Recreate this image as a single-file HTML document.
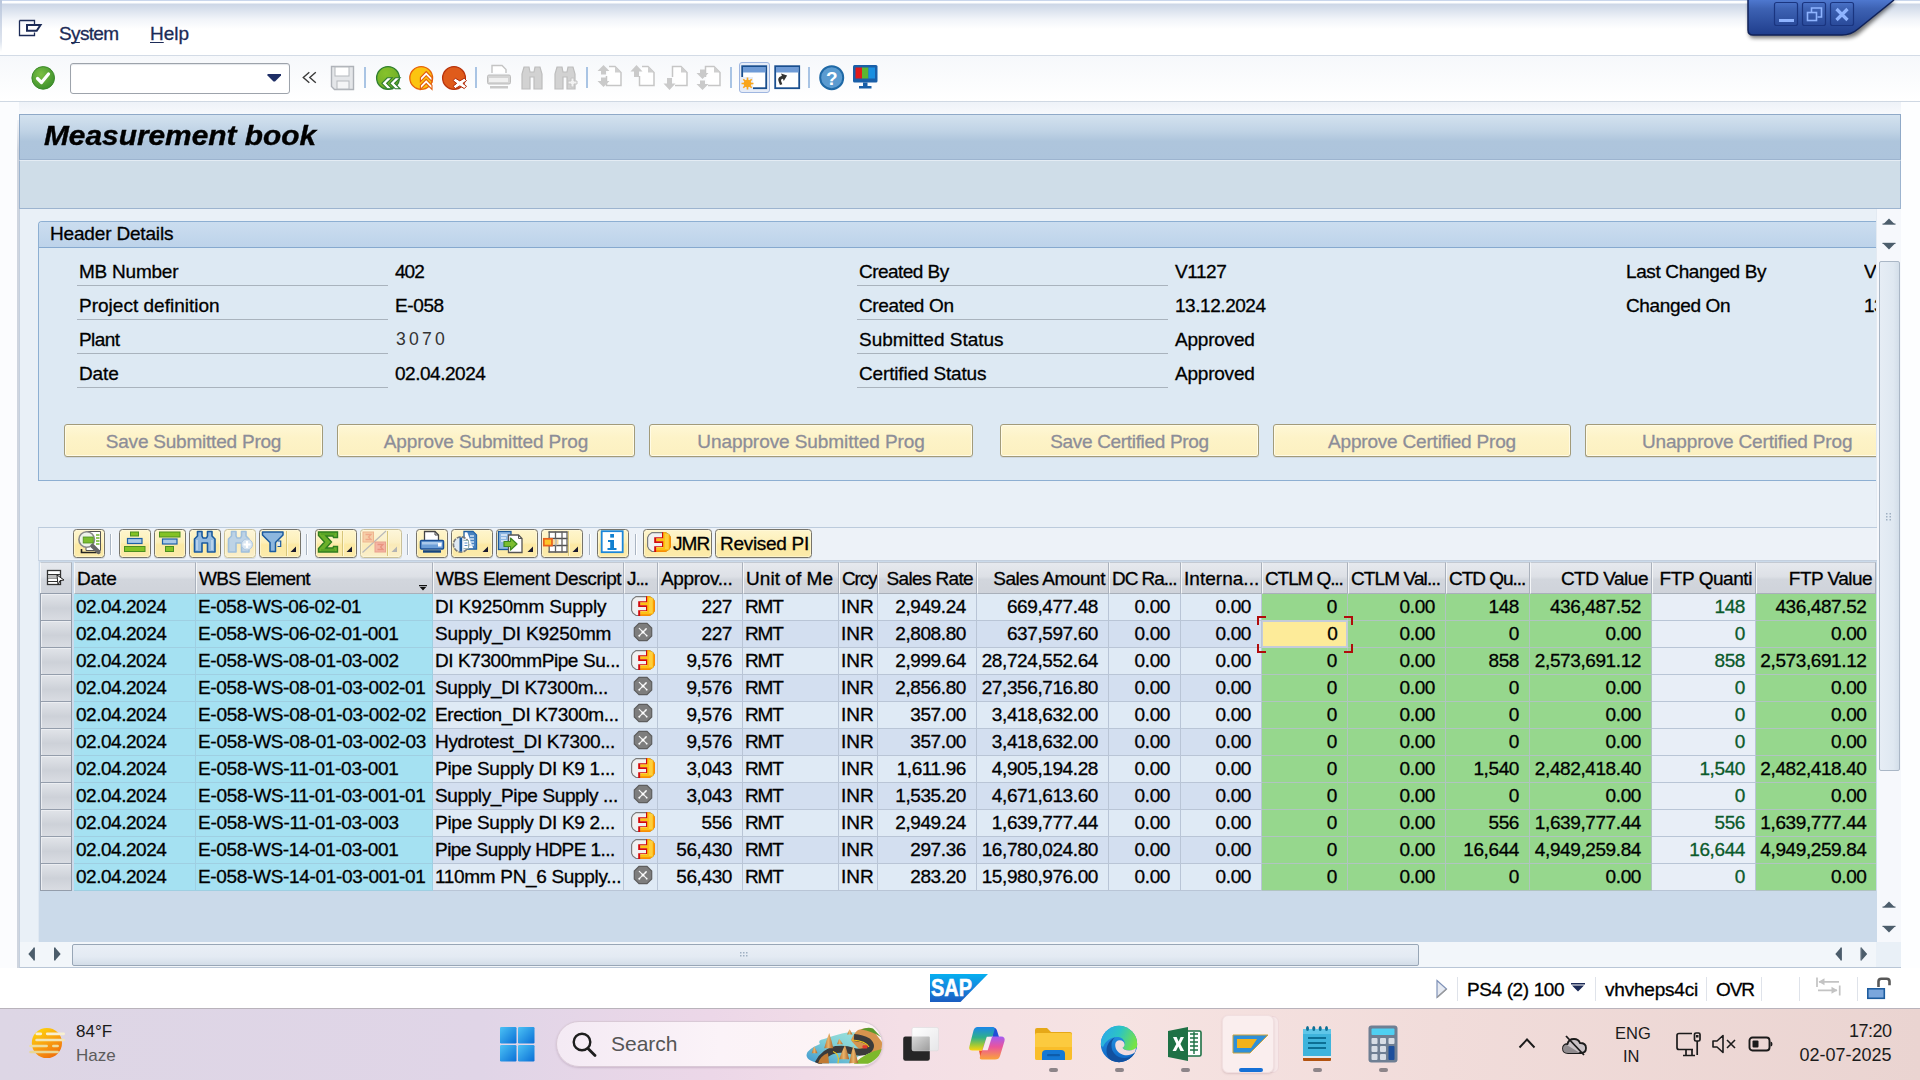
<!DOCTYPE html>
<html><head><meta charset="utf-8"><title>Measurement book</title>
<style>
*{box-sizing:border-box;margin:0;padding:0}
html,body{width:1920px;height:1080px;overflow:hidden;background:#fff}
body{position:relative;font-family:"Liberation Sans",sans-serif;font-size:19px;letter-spacing:-0.4px;color:#000;line-height:1;-webkit-text-stroke:0.3px}
.a{position:absolute}
.t{position:absolute;white-space:nowrap;line-height:22px;height:22px}
/* top chrome */
#topstrip{left:0;top:0;width:1920px;height:56px;background:linear-gradient(#c9d6ec 0,#c9d6ec 1px,#fdfeff 1.500px,#fdfeff 3px,#ccd6e6 4px,#dde4ef 11px,#f1f4f9 19px,#ffffff 29px,#ffffff 55px)}
#menuline{left:0;top:55px;width:1920px;height:1px;background:#d3dbe6}
#toolbar{left:0;top:56px;width:1920px;height:45px;background:linear-gradient(#f6f8fb,#ffffff)}
#toolline{left:0;top:101px;width:1920px;height:1px;background:#cfd8e3}
#gap{left:0;top:102px;width:1920px;height:12px;background:linear-gradient(#eef2f8,#f7f9fc)}
#leftedge{left:0;top:102px;width:19px;height:866px;background:#fbfcfe}
#rightedge{left:1901px;top:102px;width:19px;height:866px;background:#fdfeff}
.menu{color:#1c2b57}
/* title */
#title{left:19px;top:114px;width:1882px;height:46px;border:1px solid #8fa9c7;border-bottom:1px solid #9db4cf;background:linear-gradient(#d3e2ef 0,#c1d4e6 35%,#aec5dc 60%,#adc4dc 100%)}
#title span{position:absolute;left:24px;top:5px;font-size:28px;font-weight:bold;font-style:italic;line-height:32px;white-space:nowrap;letter-spacing:0;-webkit-text-stroke:0.4px #000;transform:scaleX(1.066);transform-origin:0 0}
#appbar{left:19px;top:160px;width:1882px;height:49px;border:1px solid #9db4cf;border-top:1px solid #e4ecf4;background:#cfdde8}
#main{left:19px;top:209px;width:1882px;height:758px;background:#e9f0f7;border-left:1px solid #c5d0de;border-right:1px solid #d0d9e6}
</style></head>
<body>
<!-- TOP CHROME -->
<div class="a" id="topstrip"></div>
<div class="a" id="menuline"></div>
<div class="a" id="toolbar"></div>
<div class="a" id="toolline"></div>
<div class="a" id="gap"></div>
<div class="a" id="leftedge"></div>
<div class="a" style="left:0;top:0;width:2px;height:52px;background:linear-gradient(#b9c6dc,#dfe5ef 80%,#fff)"></div>
<div class="a" id="rightedge"></div>
<div class="a" style="left:17px;top:120px;width:2px;height:848px;background:linear-gradient(#f3f5f9 0,#cfd5df 30px,#cfd5df 100%)"></div>
<!-- menu icon -->
<svg class="a" style="left:18px;top:18px" width="26" height="22" viewBox="0 0 26 22"><path d="M1.5 2.5h15v4M1.5 2.5v15h15v-3" fill="none" stroke="#1c2b57" stroke-width="1.3"/><path d="M9 7h13.500l-3.800 5.800H9z" fill="#fff" stroke="#1c2b57" stroke-width="2"/></svg>
<div class="t menu" style="left:59px;top:23px;letter-spacing:-0.65px">S<span style="text-decoration:underline;text-decoration-skip-ink:none;text-underline-offset:2px">y</span>stem</div>
<div class="t menu" style="left:150px;top:23px;letter-spacing:0"><span style="text-decoration:underline;text-decoration-skip-ink:none;text-underline-offset:2px">H</span>elp</div>
<!-- window controls -->
<svg class="a" style="left:1740px;top:0" width="170" height="46" viewBox="0 0 170 46">
<defs><linearGradient id="wg" x1="0" y1="0" x2="0" y2="1"><stop offset="0" stop-color="#4e78cf"/><stop offset="0.25" stop-color="#3d62b3"/><stop offset="1" stop-color="#1f3d8c"/></linearGradient>
<filter id="ws" x="-10%" y="-10%" width="120%" height="150%"><feGaussianBlur stdDeviation="2"/></filter></defs>
<path d="M9 2h146l-34 30q-6 6-16 6H14q-5 0-5-5z" fill="#000" opacity="0.55" filter="url(#ws)"/>
<path d="M8 0h146l-36 29q-7 6-16 6H13q-5 0-5-5z" fill="url(#wg)"/>
<path d="M8 0v30q0 5 5 5h89q9 0 16-6L154 0" fill="none" stroke="#10225a" stroke-width="1.5"/>
<g fill="none" stroke="#1a3580" stroke-width="1.2"><rect x="34.5" y="2.5" width="23" height="23" rx="2"/><rect x="62.5" y="2.5" width="23" height="23" rx="2"/><rect x="90.5" y="2.5" width="23" height="23" rx="2"/></g>
<rect x="39" y="19" width="15" height="3" fill="#8fb4ff"/>
<g fill="none" stroke="#8fb4ff" stroke-width="1.6"><rect x="67.5" y="12.5" width="9" height="8"/><path d="M71.5 12V8h10v9h-4"/></g>
<path d="M96.5 9l11 11M107.5 9l-11 11" stroke="#8fb4ff" stroke-width="3.2"/>
</svg>
<!-- toolbar -->
<svg class="a" style="left:28px;top:64px" width="28" height="28" viewBox="0 0 28 28"><defs><radialGradient id="gok" cx="0.4" cy="0.35" r="0.7"><stop offset="0" stop-color="#7bc043"/><stop offset="1" stop-color="#3c8f2c"/></radialGradient></defs><circle cx="15.200" cy="13.900" r="11.300" fill="url(#gok)" stroke="#3b8a2a" stroke-width="1"/><path d="M9.500 14.500l4 4 7-8.500" fill="none" stroke="#fff" stroke-width="3.200" stroke-linecap="round" stroke-linejoin="round"/></svg>
<div class="a" style="left:70px;top:63px;width:220px;height:31px;background:#fff;border:1px solid #9da3ab;border-radius:3px;box-shadow:inset 0 1px 1px #e3e6ea"></div>
<svg class="a" style="left:266px;top:73px" width="16" height="10" viewBox="0 0 16 10"><path d="M1.500 1h13.500v1.500l-6 6h-1.500l-6-6z" fill="#1f2f66"/></svg>
<svg class="a" style="left:300px;top:70px" width="20" height="16" viewBox="300 70 20 16"><path d="M309.300 72.300l-6 5.200 6 5.200M315.800 72.300l-6 5.200 6 5.200" fill="none" stroke="#3a3a3a" stroke-width="1.400"/></svg>
<!-- save (disabled) -->
<svg class="a" style="left:330px;top:65px" width="26" height="26" viewBox="0 0 26 26"><path d="M1.5 1.5h22v23h-19l-3-3z" fill="#e4e6e9" stroke="#aeb2b8" stroke-width="1.4"/><rect x="5" y="2" width="14" height="9" fill="#fff" stroke="#b5b9be"/><rect x="7" y="16" width="12" height="8" fill="#f4f5f6" stroke="#b5b9be"/></svg>
<div class="a" style="left:364px;top:67px;width:2px;height:21px;background:#a9c4e4"></div>
<!-- back / exit / cancel -->
<svg class="a" style="left:370px;top:60px" width="102" height="36" viewBox="370 60 102 36">
<defs><clipPath id="cb1"><circle cx="388" cy="78" r="12.300"/></clipPath><clipPath id="cb2"><circle cx="421.200" cy="78" r="12.300"/></clipPath><clipPath id="cb3"><circle cx="454" cy="78" r="12.300"/></clipPath>
<radialGradient id="gb1" cx=".4" cy=".3" r=".8"><stop offset="0" stop-color="#86c22c"/><stop offset=".7" stop-color="#74b228"/><stop offset="1" stop-color="#4f9a2b"/></radialGradient></defs>
<circle cx="388" cy="78" r="11.400" fill="url(#gb1)" stroke="#2f7f2f" stroke-width="1.300"/>
<g fill="#fff" stroke="#2c7a2c" stroke-width="1.100" stroke-linejoin="miter"><path d="M381.800 83.300l5.500-5.500h4.800l-5.500 5.500 5.500 5.500h-4.800z"/><path d="M389.800 83.300l5.500-5.500h4.800l-5.500 5.500 5.500 5.500h-4.800z"/></g>
<circle cx="421.200" cy="78" r="11.400" fill="#fcc410" stroke="#e7630c" stroke-width="1.300"/>
<g fill="#fff" stroke="#e35d0a" stroke-width="1.100"><path d="M426.200 71.500l5.800 6v4.200l-5.800-6-5.800 6v-4.200z"/><path d="M426.200 79.300l5.800 6v4.200l-5.800-6-5.800 6v-4.200z"/></g>
<circle cx="454" cy="78" r="11.400" fill="#df5b1b" stroke="#b8330c" stroke-width="1.300"/>
<g><path d="M455.300 78.200l4.500 2.700 4.500-2.700 2.200 2.400-3.600 2.800 3.600 2.800-2.200 2.400-4.500-2.700-4.500 2.700-2.200-2.400 3.600-2.800-3.600-2.800z" fill="#fff" stroke="#b02a08" stroke-width="1"/></g>
</svg>
<div class="a" style="left:475px;top:67px;width:2px;height:21px;background:#a9c4e4"></div>
<!-- disabled icons -->
<svg class="a" style="left:486px;top:64px" width="27" height="27" viewBox="0 0 27 27"><path d="M6 9V1.5h10l4 4V9" fill="#fff" stroke="#c4c4c4" stroke-width="1.4"/><rect x="1.5" y="11" width="23" height="9" rx="1.5" fill="#d4d4d4" stroke="#bdbdbd"/><rect x="3" y="14" width="19" height="4" fill="#f0f0f0"/><rect x="4" y="22" width="18" height="2.5" fill="#c9c9c9"/></svg>
<svg class="a" style="left:520px;top:64px" width="24" height="27" viewBox="0 0 24 27"><path d="M2 25V10l2-7h5l1 5h4l1-5h5l2 7v15h-8V13h-4v12z" fill="#d2d2d2" stroke="#bdbdbd" stroke-width="1.2"/></svg>
<svg class="a" style="left:553px;top:64px" width="26" height="27" viewBox="0 0 26 27"><path d="M2 25V10l2-7h5l1 5h4l1-5h5l2 7v15h-8V13h-4v12z" fill="#d2d2d2" stroke="#bdbdbd" stroke-width="1.2"/><path d="M15 17h3v-3h3v3h3v3h-3v3h-3v-3h-3z" fill="#f2f2f2" stroke="#c4c4c4"/></svg>
<div class="a" style="left:586px;top:67px;width:2px;height:21px;background:#a9c4e4"></div>
<svg class="a" style="left:597px;top:64px" width="26" height="27" viewBox="0 0 26 27"><path d="M9.500 12v9.500h14.500V8.500l-6-6H12" fill="#fff" stroke="#c6c6c6" stroke-width="1.500"/><path d="M18 2.500v6h6z" fill="#cfcfcf"/><path d="M6.500 1l6 6H9v3.500H4V7H.500zM6.500 23l6-6H9v-3.500H4V17H.500z" fill="#cacaca"/></svg>
<svg class="a" style="left:630px;top:64px" width="26" height="27" viewBox="0 0 26 27"><path d="M9.500 12v9.500h14.500V8.500l-6-6H12" fill="#fff" stroke="#c6c6c6" stroke-width="1.500"/><path d="M18 2.500v6h6z" fill="#cfcfcf"/><path d="M6.500 1l6 6.500H9v5.500H4V7.500H.500z" fill="#cacaca"/></svg>
<svg class="a" style="left:663px;top:64px" width="26" height="27" viewBox="0 0 26 27"><path d="M9.500 13V2.500h8.500l6 6v13H12" fill="#fff" stroke="#c6c6c6" stroke-width="1.500"/><path d="M18 2.500v6h6z" fill="#cfcfcf"/><path d="M6.500 26l6-6.500H9V14H4v5.500H.500z" fill="#cacaca"/></svg>
<svg class="a" style="left:696px;top:64px" width="26" height="27" viewBox="0 0 26 27"><path d="M9.500 13V2.500h8.500l6 6v13H12" fill="#fff" stroke="#c6c6c6" stroke-width="1.500"/><path d="M18 2.500v6h6z" fill="#cfcfcf"/><path d="M6.500 15l6-6H9V5.500H4V9H.500zM6.500 26l6-6H9v-3.500H4V20H.500z" fill="#cacaca"/></svg>
<div class="a" style="left:730px;top:67px;width:2px;height:21px;background:#a9c4e4"></div>
<!-- layout buttons -->
<div class="a" style="left:739px;top:62px;width:31px;height:31px;border:1px solid #9fb6e0;border-radius:3px;background:#e6ecf7"></div>
<svg class="a" style="left:741px;top:65px" width="27" height="25" viewBox="0 0 27 25"><rect x="1.2" y="1.2" width="24" height="22" fill="#fff" stroke="#1a4f8f" stroke-width="1.8"/><rect x="2" y="2" width="22.5" height="5.5" fill="#6f9bd6"/><rect x="0" y="12" width="12" height="13" fill="#e6ecf7"/><circle cx="6.5" cy="18.5" r="3.8" fill="#f9a51a"/><g stroke="#f9a51a" stroke-width="1.6"><path d="M6.5 12.5v12M.5 18.5h12M2.3 14.3l8.4 8.4M10.7 14.3l-8.4 8.4"/></g></svg>
<svg class="a" style="left:774px;top:65px" width="27" height="25" viewBox="0 0 27 25"><rect x="1.2" y="1.2" width="24" height="22" fill="#fff" stroke="#1a4f8f" stroke-width="1.8"/><rect x="2" y="2" width="22.5" height="5.5" fill="#6f9bd6"/><path d="M4 19v-4q0-4 4-4h1V8.5l5 4-5 4V14H8q-1.5 0-1.5 1.5V19z" fill="#333" transform="rotate(-20 8 14)"/></svg>
<div class="a" style="left:808px;top:67px;width:2px;height:21px;background:#a9c4e4"></div>
<svg class="a" style="left:818px;top:64px" width="28" height="28" viewBox="0 0 28 28"><circle cx="13.7" cy="13.7" r="11.5" fill="#5b9bd0" stroke="#1f69a6" stroke-width="2"/><text x="13.7" y="20.5" font-family="Liberation Sans" font-weight="bold" font-size="19" fill="#fff" text-anchor="middle">?</text></svg>
<svg class="a" style="left:852px;top:64px" width="27" height="27" viewBox="0 0 27 27"><rect x="1" y="1" width="24.5" height="17.5" rx="1.5" fill="#1a5fa8"/><rect x="3.5" y="3.5" width="6.5" height="11" fill="#e01b1b"/><rect x="10" y="3.5" width="6.5" height="11" fill="#5db531"/><rect x="16.5" y="3.5" width="6.5" height="11" fill="#1a8fe0"/><rect x="11" y="18.5" width="4.5" height="4" fill="#1a5fa8"/><rect x="7" y="22" width="12.5" height="2.5" fill="#1a5fa8"/></svg>
<!-- title -->
<div class="a" id="title"><span>Measurement book</span></div>
<div class="a" id="appbar"></div>
<div class="a" id="main"></div>
<style>
#grp{left:38px;top:221px;width:1839px;height:260px;border:1px solid #8dafd2;border-right:none;border-radius:4px 0 0 0;background:#dde9f3}
#grpt{left:39px;top:222px;width:1838px;height:26px;background:linear-gradient(#cbddef,#bdd3ea);border-bottom:1px solid #86a9cf;border-radius:3px 0 0 0}
.ul{position:absolute;height:1px;background:#a9b3bd;width:311px}
.btn{position:absolute;top:424px;height:33px;border:1px solid #a29b7a;border-radius:3px;background:linear-gradient(#fef7d6 0,#fdf3c8 40%,#fcf0c0 100%);color:#8c8d98;text-align:center;line-height:34px;white-space:nowrap;overflow:hidden;box-shadow:0 1px 0 #cfd6de,inset 0 0 0 1px #fffbe6}
</style>
<div class="a" id="grp"></div>
<div class="a" id="grpt"></div>
<div class="t" style="left:50px;top:223px;letter-spacing:-0.17px">Header Details</div>
<div class="t" style="left:79px;top:261px;letter-spacing:-0.23px">MB Number</div>
<div class="t" style="left:79px;top:295px;letter-spacing:0.01px">Project definition</div>
<div class="t" style="left:79px;top:329px;letter-spacing:-0.56px">Plant</div>
<div class="t" style="left:79px;top:363px;letter-spacing:-0.12px">Date</div>
<div class="ul" style="left:77px;top:285px"></div><div class="ul" style="left:77px;top:319px"></div><div class="ul" style="left:77px;top:353px"></div><div class="ul" style="left:77px;top:387px"></div>
<div class="t" style="left:395px;top:261px;letter-spacing:-0.97px">402</div>
<div class="t" style="left:395px;top:295px;letter-spacing:-0.38px">E-058</div>
<div class="t" style="left:396px;top:327.500px;font-size:17.600px;letter-spacing:3.200px;color:#333;-webkit-text-stroke:0">3070</div>
<div class="t" style="left:395px;top:363px;letter-spacing:-0.47px">02.04.2024</div>
<div class="t" style="left:859px;top:261px;letter-spacing:-0.54px">Created By</div>
<div class="t" style="left:859px;top:295px;letter-spacing:-0.36px">Created On</div>
<div class="t" style="left:859px;top:329px;letter-spacing:-0.01px">Submitted Status</div>
<div class="t" style="left:859px;top:363px;letter-spacing:-0.16px">Certified Status</div>
<div class="ul" style="left:857px;top:285px"></div><div class="ul" style="left:857px;top:319px"></div><div class="ul" style="left:857px;top:353px"></div><div class="ul" style="left:857px;top:387px"></div>
<div class="t" style="left:1175px;top:261px;letter-spacing:-0.44px">V1127</div>
<div class="t" style="left:1175px;top:295px;letter-spacing:-0.45px">13.12.2024</div>
<div class="t" style="left:1175px;top:329px;letter-spacing:-0.22px">Approved</div>
<div class="t" style="left:1175px;top:363px;letter-spacing:-0.22px">Approved</div>
<div class="t" style="left:1626px;top:261px;letter-spacing:-0.38px">Last Changed By</div>
<div class="t" style="left:1626px;top:295px;letter-spacing:-0.35px">Changed On</div>
<div class="t" style="left:1864px;top:261px;width:12px;overflow:hidden;letter-spacing:-0.44px">V1127</div>
<div class="t" style="left:1864px;top:295px;width:12px;overflow:hidden;letter-spacing:-0.45px">13.12.2024</div>
<div class="btn" style="left:64px;width:259px;letter-spacing:-0.22px">Save Submitted Prog</div>
<div class="btn" style="left:337px;width:298px;letter-spacing:-0.12px">Approve Submitted Prog</div>
<div class="btn" style="left:649px;width:324px;letter-spacing:-0.07px">Unapprove Submitted Prog</div>
<div class="btn" style="left:1000px;width:259px;letter-spacing:-0.32px">Save Certified Prog</div>
<div class="btn" style="left:1273px;width:298px;letter-spacing:-0.2px">Approve Certified Prog</div>
<div class="btn" style="left:1585px;width:292px;border-right:none;border-radius:3px 0 0 3px;text-align:left;padding-left:56px;letter-spacing:-0.17px">Unapprove Certified Prog</div>
<!-- right vertical scroll area -->
<div class="a" style="left:1876px;top:209px;width:25px;height:733px;background:#f6f8fc;border-left:1px solid #e3eaf2"></div>
<svg class="a" style="left:1881px;top:215px" width="16" height="40" viewBox="0 0 16 40"><path d="M2.500 9h11L8 3.500z" fill="#4c5d6b"/><path d="M2.500 29h11L8 34.500z" fill="#4c5d6b"/><rect x="1.500" y="8.500" width="13" height="1.200" fill="#4c5d6b"/><rect x="1.500" y="27.800" width="13" height="1.200" fill="#4c5d6b"/></svg>
<div class="a" style="left:1879px;top:261px;width:21px;height:510px;border:1px solid #aab7c6;border-radius:2px;background:linear-gradient(90deg,#e6edf5,#dfe8f1 70%,#d3dee9)"></div>
<svg class="a" style="left:1885px;top:512px" width="8" height="10" viewBox="0 0 8 10"><g fill="#9fb0c2"><rect x="1" y="1" width="1.5" height="1.5"/><rect x="4.5" y="1" width="1.5" height="1.5"/><rect x="1" y="4" width="1.5" height="1.5"/><rect x="4.5" y="4" width="1.5" height="1.5"/><rect x="1" y="7" width="1.5" height="1.5"/><rect x="4.5" y="7" width="1.5" height="1.5"/></g></svg>
<svg class="a" style="left:1881px;top:898px" width="16" height="40" viewBox="0 0 16 40"><path d="M2.500 9h11L8 3.500z" fill="#4c5d6b"/><path d="M2.500 29h11L8 34.500z" fill="#4c5d6b"/><rect x="1.500" y="8.500" width="13" height="1.200" fill="#4c5d6b"/><rect x="1.500" y="27.800" width="13" height="1.200" fill="#4c5d6b"/></svg>
<style>
#alvtb{left:38px;top:527px;width:1839px;height:34px;border-top:1px solid #bccbdc;border-bottom:1px solid #c3cfde;border-left:1px solid #c9d5e3;background:#edf2f8}
#alvbg{left:38px;top:561px;width:1839px;height:381px;background:#cbdaea;border-left:1px solid #dfe8f2}
.hc{position:absolute;top:562px;height:32px;background:linear-gradient(#e6e9ee 0,#dde0e6 45%,#d2d6dd 55%,#cfd3da 100%);border-left:1px solid #f4f6f8;border-right:1px solid #aab1bc;border-bottom:1px solid #a9b0ba;border-top:1px solid #c3c9d2;overflow:hidden;white-space:nowrap;line-height:32px;padding:0 3px 0 2px}
.c{position:absolute;height:27px;border-right:1px solid #b9c5d6;border-bottom:1px solid #b9c5d6;overflow:hidden;white-space:nowrap;line-height:26px;padding:0 4px 0 2px}
.sel{position:absolute;left:40px;width:32px;height:28px;background:linear-gradient(#e1e4e9,#cdd1d8 55%,#d9dce2);border:1px solid #949dab;box-shadow:inset 1px 1px 0 #eceef2}
.o{background:#dfeaf5}.e{background:#d3dff0}
.k{background:#a5e1f2;border-right-color:#9fcfe2;border-bottom-color:#9fcfe2}
.g{background:#96d78d;border-right-color:#b0c4c0;border-bottom-color:#b0c4c0}
.fq{background:#e8eef7;color:#0b5a2b}
.r{text-align:right}.l{text-align:left}
</style>
<div class="a" id="alvtb"></div><div class="a" id="alvbg"></div>
<div class="hc" style="left:40px;width:32px"></div>
<svg class="a" style="left:46px;top:569px" width="20" height="18" viewBox="0 0 20 18"><rect x="1.5" y="1.5" width="13" height="14" fill="#fff" stroke="#333" stroke-width="1.3"/><path d="M1.5 5.5h13M1.5 9h13M1.5 12.5h13" stroke="#333" stroke-width="1.2"/><rect x="2" y="6" width="12" height="3" fill="#bdbdbd"/><path d="M11 6l7 5-4 .6L12 16z" fill="#fff" stroke="#222" stroke-width="1"/></svg>
<div class="hc l" style="left:74px;width:122px;letter-spacing:-0.12px">Date</div>
<div class="hc l" style="left:196px;width:237px;letter-spacing:-0.67px">WBS Element</div>
<div class="hc l" style="left:433px;width:191px">WBS Element Descript</div>
<div class="hc l" style="left:624px;width:34px;letter-spacing:-1.1px">J...</div>
<div class="hc l" style="left:658px;width:85px;letter-spacing:-0.36px">Approv...</div>
<div class="hc l" style="left:743px;width:96px;letter-spacing:0.05px">Unit of Me</div>
<div class="hc l" style="left:839px;width:39px;letter-spacing:-1.1px">Crcy</div>
<div class="hc r" style="left:878px;width:99px;letter-spacing:-0.65px">Sales Rate</div>
<div class="hc r" style="left:977px;width:132px;letter-spacing:-0.46px">Sales Amount</div>
<div class="hc l" style="left:1109px;width:72px;letter-spacing:-1.04px">DC Ra...</div>
<div class="hc l" style="left:1181px;width:81px;letter-spacing:0.03px">Interna...</div>
<div class="hc l" style="left:1262px;width:86px;letter-spacing:-1.1px">CTLM Q...</div>
<div class="hc l" style="left:1348px;width:98px;letter-spacing:-0.89px">CTLM Val...</div>
<div class="hc l" style="left:1446px;width:84px;letter-spacing:-1.03px">CTD Qu...</div>
<div class="hc r" style="left:1530px;width:122px;letter-spacing:-0.49px">CTD Value</div>
<div class="hc r" style="left:1652px;width:104px;letter-spacing:-0.44px">FTP Quanti</div>
<div class="hc r" style="left:1756px;width:120px;letter-spacing:-0.54px">FTP Value</div>
<svg class="a" style="left:419px;top:585px" width="8" height="6" viewBox="0 0 8 6"><path d="M0 0h8v1.200H0zM.800 2h6.400L4 5.600z" fill="#111"/></svg>
<div class="sel" style="top:593px"></div>
<div class="c k l" style="left:74px;top:594px;width:122px;letter-spacing:-0.47px">02.04.2024</div>
<div class="c k l" style="left:196px;top:594px;width:237px;letter-spacing:-0.4px">E-058-WS-06-02-01</div>
<div class="c o l" style="left:433px;top:594px;width:191px;letter-spacing:-0.17px">DI K9250mm Supply</div>
<div class="c o l" style="left:624px;top:594px;width:34px"><svg width="24" height="20.500" viewBox="0 0 24 20.500" style="position:absolute;left:7px;top:2px"><defs><clipPath id="fp0"><path d="M5 .3h13.500l3.500 2 2 3.200v9l-2 3.200-3.500 2.300H5L1.800 17.500.3 14.500v-9L1.800 2.500z"/></clipPath></defs><path d="M5 .6h13.500l3.300 2 1.900 3v8.800l-1.900 3-3.300 2.100H5l-3-2.300-1.400-2.800v-8.800L2 2.800z" fill="#f1f1f1" stroke="#7b7b7b" stroke-width="1.200"/><g clip-path="url(#fp0)"><path d="M16 0h9v21H9.200v-5.800H16zM9.200 6.300H16v2.900H9.200z" fill="#fdc114"/><path d="M18 2h3.500v15H18z" fill="#fece3c"/><rect x="22.300" y="2" width="2" height="16" fill="#f78d05"/><rect x="9.200" y="18.300" width="13" height="2" fill="#f78d05"/><rect x="16" y="0" width="6" height="1.100" fill="#f9a010"/><path d="M7.200 5.300H15V0h1.200v6.300H9.200v2.900h7v5.900H9.200V21H7.200v-6.800H15V11.100H7.200z" fill="#d40a0a"/></g></svg></div>
<div class="c o r" style="left:658px;top:594px;width:85px;padding-right:10px">227</div>
<div class="c o l" style="left:743px;top:594px;width:96px;letter-spacing:-1.1px">RMT</div>
<div class="c o l" style="left:839px;top:594px;width:39px;letter-spacing:0.0px">INR</div>
<div class="c o r" style="left:878px;top:594px;width:99px;padding-right:10px">2,949.24</div>
<div class="c o r" style="left:977px;top:594px;width:132px;padding-right:10px">669,477.48</div>
<div class="c o r" style="left:1109px;top:594px;width:72px;padding-right:10px">0.00</div>
<div class="c o r" style="left:1181px;top:594px;width:81px;padding-right:10px">0.00</div>
<div class="c g r" style="left:1262px;top:594px;width:86px;padding-right:10px">0</div>
<div class="c g r" style="left:1348px;top:594px;width:98px;padding-right:10px">0.00</div>
<div class="c g r" style="left:1446px;top:594px;width:84px;padding-right:10px">148</div>
<div class="c g r" style="left:1530px;top:594px;width:122px;padding-right:10px">436,487.52</div>
<div class="c fq r" style="left:1652px;top:594px;width:104px;padding-right:10px">148</div>
<div class="c g r" style="left:1756px;top:594px;width:120px;padding-right:9.500px;border-right:none">436,487.52</div>
<div class="sel" style="top:620px"></div>
<div class="c k l" style="left:74px;top:621px;width:122px;letter-spacing:-0.47px">02.04.2024</div>
<div class="c k l" style="left:196px;top:621px;width:237px;letter-spacing:-0.36px">E-058-WS-06-02-01-001</div>
<div class="c e l" style="left:433px;top:621px;width:191px;letter-spacing:-0.2px">Supply_DI K9250mm</div>
<div class="c e l" style="left:624px;top:621px;width:34px"><svg width="20" height="20" viewBox="0 0 20 20" style="position:absolute;left:9px;top:1px"><path d="M6 1.300h8l4.700 4.700v8l-4.700 4.700H6L1.300 14V6z" fill="#7d7d7d" stroke="#5e5e5e" stroke-width="1.200"/><path d="M6.300 6.300l7.400 7.400M13.700 6.300l-7.400 7.400" stroke="#f4f4f4" stroke-width="1.200"/><circle cx="10" cy="10" r="1.500" fill="#fff"/><g fill="#fff"><circle cx="6.300" cy="13.700" r="1"/><circle cx="13.700" cy="13.700" r=".9"/><circle cx="12.500" cy="7.500" r=".9"/><circle cx="6.300" cy="6.300" r=".6"/></g></svg></div>
<div class="c e r" style="left:658px;top:621px;width:85px;padding-right:10px">227</div>
<div class="c e l" style="left:743px;top:621px;width:96px;letter-spacing:-1.1px">RMT</div>
<div class="c e l" style="left:839px;top:621px;width:39px;letter-spacing:0.0px">INR</div>
<div class="c e r" style="left:878px;top:621px;width:99px;padding-right:10px">2,808.80</div>
<div class="c e r" style="left:977px;top:621px;width:132px;padding-right:10px">637,597.60</div>
<div class="c e r" style="left:1109px;top:621px;width:72px;padding-right:10px">0.00</div>
<div class="c e r" style="left:1181px;top:621px;width:81px;padding-right:10px">0.00</div>
<div class="c g r" style="left:1262px;top:621px;width:86px;padding-right:10px">0</div>
<div class="c g r" style="left:1348px;top:621px;width:98px;padding-right:10px">0.00</div>
<div class="c g r" style="left:1446px;top:621px;width:84px;padding-right:10px">0</div>
<div class="c g r" style="left:1530px;top:621px;width:122px;padding-right:10px">0.00</div>
<div class="c fq r" style="left:1652px;top:621px;width:104px;padding-right:10px">0</div>
<div class="c g r" style="left:1756px;top:621px;width:120px;padding-right:9.500px;border-right:none">0.00</div>
<div class="sel" style="top:647px"></div>
<div class="c k l" style="left:74px;top:648px;width:122px;letter-spacing:-0.47px">02.04.2024</div>
<div class="c k l" style="left:196px;top:648px;width:237px;letter-spacing:-0.35px">E-058-WS-08-01-03-002</div>
<div class="c o l" style="left:433px;top:648px;width:191px;letter-spacing:-0.42px">DI K7300mmPipe Su...</div>
<div class="c o l" style="left:624px;top:648px;width:34px"><svg width="24" height="20.500" viewBox="0 0 24 20.500" style="position:absolute;left:7px;top:2px"><defs><clipPath id="fp2"><path d="M5 .3h13.500l3.500 2 2 3.200v9l-2 3.200-3.500 2.300H5L1.800 17.500.3 14.500v-9L1.800 2.500z"/></clipPath></defs><path d="M5 .6h13.500l3.300 2 1.900 3v8.800l-1.900 3-3.300 2.100H5l-3-2.300-1.400-2.800v-8.800L2 2.800z" fill="#f1f1f1" stroke="#7b7b7b" stroke-width="1.200"/><g clip-path="url(#fp2)"><path d="M16 0h9v21H9.200v-5.800H16zM9.200 6.300H16v2.900H9.200z" fill="#fdc114"/><path d="M18 2h3.500v15H18z" fill="#fece3c"/><rect x="22.300" y="2" width="2" height="16" fill="#f78d05"/><rect x="9.200" y="18.300" width="13" height="2" fill="#f78d05"/><rect x="16" y="0" width="6" height="1.100" fill="#f9a010"/><path d="M7.200 5.300H15V0h1.200v6.300H9.200v2.900h7v5.900H9.200V21H7.200v-6.800H15V11.100H7.200z" fill="#d40a0a"/></g></svg></div>
<div class="c o r" style="left:658px;top:648px;width:85px;padding-right:10px">9,576</div>
<div class="c o l" style="left:743px;top:648px;width:96px;letter-spacing:-1.1px">RMT</div>
<div class="c o l" style="left:839px;top:648px;width:39px;letter-spacing:0.0px">INR</div>
<div class="c o r" style="left:878px;top:648px;width:99px;padding-right:10px">2,999.64</div>
<div class="c o r" style="left:977px;top:648px;width:132px;padding-right:10px">28,724,552.64</div>
<div class="c o r" style="left:1109px;top:648px;width:72px;padding-right:10px">0.00</div>
<div class="c o r" style="left:1181px;top:648px;width:81px;padding-right:10px">0.00</div>
<div class="c g r" style="left:1262px;top:648px;width:86px;padding-right:10px">0</div>
<div class="c g r" style="left:1348px;top:648px;width:98px;padding-right:10px">0.00</div>
<div class="c g r" style="left:1446px;top:648px;width:84px;padding-right:10px">858</div>
<div class="c g r" style="left:1530px;top:648px;width:122px;padding-right:10px">2,573,691.12</div>
<div class="c fq r" style="left:1652px;top:648px;width:104px;padding-right:10px">858</div>
<div class="c g r" style="left:1756px;top:648px;width:120px;padding-right:9.500px;border-right:none">2,573,691.12</div>
<div class="sel" style="top:674px"></div>
<div class="c k l" style="left:74px;top:675px;width:122px;letter-spacing:-0.47px">02.04.2024</div>
<div class="c k l" style="left:196px;top:675px;width:237px;letter-spacing:-0.33px">E-058-WS-08-01-03-002-01</div>
<div class="c e l" style="left:433px;top:675px;width:191px;letter-spacing:-0.35px">Supply_DI K7300m...</div>
<div class="c e l" style="left:624px;top:675px;width:34px"><svg width="20" height="20" viewBox="0 0 20 20" style="position:absolute;left:9px;top:1px"><path d="M6 1.300h8l4.700 4.700v8l-4.700 4.700H6L1.300 14V6z" fill="#7d7d7d" stroke="#5e5e5e" stroke-width="1.200"/><path d="M6.300 6.300l7.400 7.400M13.700 6.300l-7.400 7.400" stroke="#f4f4f4" stroke-width="1.200"/><circle cx="10" cy="10" r="1.500" fill="#fff"/><g fill="#fff"><circle cx="6.300" cy="13.700" r="1"/><circle cx="13.700" cy="13.700" r=".9"/><circle cx="12.500" cy="7.500" r=".9"/><circle cx="6.300" cy="6.300" r=".6"/></g></svg></div>
<div class="c e r" style="left:658px;top:675px;width:85px;padding-right:10px">9,576</div>
<div class="c e l" style="left:743px;top:675px;width:96px;letter-spacing:-1.1px">RMT</div>
<div class="c e l" style="left:839px;top:675px;width:39px;letter-spacing:0.0px">INR</div>
<div class="c e r" style="left:878px;top:675px;width:99px;padding-right:10px">2,856.80</div>
<div class="c e r" style="left:977px;top:675px;width:132px;padding-right:10px">27,356,716.80</div>
<div class="c e r" style="left:1109px;top:675px;width:72px;padding-right:10px">0.00</div>
<div class="c e r" style="left:1181px;top:675px;width:81px;padding-right:10px">0.00</div>
<div class="c g r" style="left:1262px;top:675px;width:86px;padding-right:10px">0</div>
<div class="c g r" style="left:1348px;top:675px;width:98px;padding-right:10px">0.00</div>
<div class="c g r" style="left:1446px;top:675px;width:84px;padding-right:10px">0</div>
<div class="c g r" style="left:1530px;top:675px;width:122px;padding-right:10px">0.00</div>
<div class="c fq r" style="left:1652px;top:675px;width:104px;padding-right:10px">0</div>
<div class="c g r" style="left:1756px;top:675px;width:120px;padding-right:9.500px;border-right:none">0.00</div>
<div class="sel" style="top:701px"></div>
<div class="c k l" style="left:74px;top:702px;width:122px;letter-spacing:-0.47px">02.04.2024</div>
<div class="c k l" style="left:196px;top:702px;width:237px;letter-spacing:-0.31px">E-058-WS-08-01-03-002-02</div>
<div class="c o l" style="left:433px;top:702px;width:191px;letter-spacing:-0.36px">Erection_DI K7300m...</div>
<div class="c o l" style="left:624px;top:702px;width:34px"><svg width="20" height="20" viewBox="0 0 20 20" style="position:absolute;left:9px;top:1px"><path d="M6 1.300h8l4.700 4.700v8l-4.700 4.700H6L1.300 14V6z" fill="#7d7d7d" stroke="#5e5e5e" stroke-width="1.200"/><path d="M6.300 6.300l7.400 7.400M13.700 6.300l-7.400 7.400" stroke="#f4f4f4" stroke-width="1.200"/><circle cx="10" cy="10" r="1.500" fill="#fff"/><g fill="#fff"><circle cx="6.300" cy="13.700" r="1"/><circle cx="13.700" cy="13.700" r=".9"/><circle cx="12.500" cy="7.500" r=".9"/><circle cx="6.300" cy="6.300" r=".6"/></g></svg></div>
<div class="c o r" style="left:658px;top:702px;width:85px;padding-right:10px">9,576</div>
<div class="c o l" style="left:743px;top:702px;width:96px;letter-spacing:-1.1px">RMT</div>
<div class="c o l" style="left:839px;top:702px;width:39px;letter-spacing:0.0px">INR</div>
<div class="c o r" style="left:878px;top:702px;width:99px;padding-right:10px">357.00</div>
<div class="c o r" style="left:977px;top:702px;width:132px;padding-right:10px">3,418,632.00</div>
<div class="c o r" style="left:1109px;top:702px;width:72px;padding-right:10px">0.00</div>
<div class="c o r" style="left:1181px;top:702px;width:81px;padding-right:10px">0.00</div>
<div class="c g r" style="left:1262px;top:702px;width:86px;padding-right:10px">0</div>
<div class="c g r" style="left:1348px;top:702px;width:98px;padding-right:10px">0.00</div>
<div class="c g r" style="left:1446px;top:702px;width:84px;padding-right:10px">0</div>
<div class="c g r" style="left:1530px;top:702px;width:122px;padding-right:10px">0.00</div>
<div class="c fq r" style="left:1652px;top:702px;width:104px;padding-right:10px">0</div>
<div class="c g r" style="left:1756px;top:702px;width:120px;padding-right:9.500px;border-right:none">0.00</div>
<div class="sel" style="top:728px"></div>
<div class="c k l" style="left:74px;top:729px;width:122px;letter-spacing:-0.47px">02.04.2024</div>
<div class="c k l" style="left:196px;top:729px;width:237px;letter-spacing:-0.31px">E-058-WS-08-01-03-002-03</div>
<div class="c e l" style="left:433px;top:729px;width:191px;letter-spacing:-0.33px">Hydrotest_DI K7300...</div>
<div class="c e l" style="left:624px;top:729px;width:34px"><svg width="20" height="20" viewBox="0 0 20 20" style="position:absolute;left:9px;top:1px"><path d="M6 1.300h8l4.700 4.700v8l-4.700 4.700H6L1.300 14V6z" fill="#7d7d7d" stroke="#5e5e5e" stroke-width="1.200"/><path d="M6.300 6.300l7.400 7.400M13.700 6.300l-7.400 7.400" stroke="#f4f4f4" stroke-width="1.200"/><circle cx="10" cy="10" r="1.500" fill="#fff"/><g fill="#fff"><circle cx="6.300" cy="13.700" r="1"/><circle cx="13.700" cy="13.700" r=".9"/><circle cx="12.500" cy="7.500" r=".9"/><circle cx="6.300" cy="6.300" r=".6"/></g></svg></div>
<div class="c e r" style="left:658px;top:729px;width:85px;padding-right:10px">9,576</div>
<div class="c e l" style="left:743px;top:729px;width:96px;letter-spacing:-1.1px">RMT</div>
<div class="c e l" style="left:839px;top:729px;width:39px;letter-spacing:0.0px">INR</div>
<div class="c e r" style="left:878px;top:729px;width:99px;padding-right:10px">357.00</div>
<div class="c e r" style="left:977px;top:729px;width:132px;padding-right:10px">3,418,632.00</div>
<div class="c e r" style="left:1109px;top:729px;width:72px;padding-right:10px">0.00</div>
<div class="c e r" style="left:1181px;top:729px;width:81px;padding-right:10px">0.00</div>
<div class="c g r" style="left:1262px;top:729px;width:86px;padding-right:10px">0</div>
<div class="c g r" style="left:1348px;top:729px;width:98px;padding-right:10px">0.00</div>
<div class="c g r" style="left:1446px;top:729px;width:84px;padding-right:10px">0</div>
<div class="c g r" style="left:1530px;top:729px;width:122px;padding-right:10px">0.00</div>
<div class="c fq r" style="left:1652px;top:729px;width:104px;padding-right:10px">0</div>
<div class="c g r" style="left:1756px;top:729px;width:120px;padding-right:9.500px;border-right:none">0.00</div>
<div class="sel" style="top:755px"></div>
<div class="c k l" style="left:74px;top:756px;width:122px;letter-spacing:-0.47px">02.04.2024</div>
<div class="c k l" style="left:196px;top:756px;width:237px;letter-spacing:-0.29px">E-058-WS-11-01-03-001</div>
<div class="c o l" style="left:433px;top:756px;width:191px;letter-spacing:-0.27px">Pipe Supply DI K9 1...</div>
<div class="c o l" style="left:624px;top:756px;width:34px"><svg width="24" height="20.500" viewBox="0 0 24 20.500" style="position:absolute;left:7px;top:2px"><defs><clipPath id="fp6"><path d="M5 .3h13.500l3.500 2 2 3.200v9l-2 3.200-3.500 2.300H5L1.800 17.500.3 14.500v-9L1.800 2.500z"/></clipPath></defs><path d="M5 .6h13.500l3.300 2 1.900 3v8.800l-1.900 3-3.300 2.100H5l-3-2.300-1.400-2.800v-8.800L2 2.800z" fill="#f1f1f1" stroke="#7b7b7b" stroke-width="1.200"/><g clip-path="url(#fp6)"><path d="M16 0h9v21H9.200v-5.800H16zM9.200 6.300H16v2.900H9.200z" fill="#fdc114"/><path d="M18 2h3.500v15H18z" fill="#fece3c"/><rect x="22.300" y="2" width="2" height="16" fill="#f78d05"/><rect x="9.200" y="18.300" width="13" height="2" fill="#f78d05"/><rect x="16" y="0" width="6" height="1.100" fill="#f9a010"/><path d="M7.200 5.300H15V0h1.200v6.300H9.200v2.900h7v5.900H9.200V21H7.200v-6.800H15V11.100H7.200z" fill="#d40a0a"/></g></svg></div>
<div class="c o r" style="left:658px;top:756px;width:85px;padding-right:10px">3,043</div>
<div class="c o l" style="left:743px;top:756px;width:96px;letter-spacing:-1.1px">RMT</div>
<div class="c o l" style="left:839px;top:756px;width:39px;letter-spacing:0.0px">INR</div>
<div class="c o r" style="left:878px;top:756px;width:99px;padding-right:10px">1,611.96</div>
<div class="c o r" style="left:977px;top:756px;width:132px;padding-right:10px">4,905,194.28</div>
<div class="c o r" style="left:1109px;top:756px;width:72px;padding-right:10px">0.00</div>
<div class="c o r" style="left:1181px;top:756px;width:81px;padding-right:10px">0.00</div>
<div class="c g r" style="left:1262px;top:756px;width:86px;padding-right:10px">0</div>
<div class="c g r" style="left:1348px;top:756px;width:98px;padding-right:10px">0.00</div>
<div class="c g r" style="left:1446px;top:756px;width:84px;padding-right:10px">1,540</div>
<div class="c g r" style="left:1530px;top:756px;width:122px;padding-right:10px">2,482,418.40</div>
<div class="c fq r" style="left:1652px;top:756px;width:104px;padding-right:10px">1,540</div>
<div class="c g r" style="left:1756px;top:756px;width:120px;padding-right:9.500px;border-right:none">2,482,418.40</div>
<div class="sel" style="top:782px"></div>
<div class="c k l" style="left:74px;top:783px;width:122px;letter-spacing:-0.47px">02.04.2024</div>
<div class="c k l" style="left:196px;top:783px;width:237px;letter-spacing:-0.27px">E-058-WS-11-01-03-001-01</div>
<div class="c e l" style="left:433px;top:783px;width:191px;letter-spacing:-0.38px">Supply_Pipe Supply ...</div>
<div class="c e l" style="left:624px;top:783px;width:34px"><svg width="20" height="20" viewBox="0 0 20 20" style="position:absolute;left:9px;top:1px"><path d="M6 1.300h8l4.700 4.700v8l-4.700 4.700H6L1.300 14V6z" fill="#7d7d7d" stroke="#5e5e5e" stroke-width="1.200"/><path d="M6.300 6.300l7.400 7.400M13.700 6.300l-7.400 7.400" stroke="#f4f4f4" stroke-width="1.200"/><circle cx="10" cy="10" r="1.500" fill="#fff"/><g fill="#fff"><circle cx="6.300" cy="13.700" r="1"/><circle cx="13.700" cy="13.700" r=".9"/><circle cx="12.500" cy="7.500" r=".9"/><circle cx="6.300" cy="6.300" r=".6"/></g></svg></div>
<div class="c e r" style="left:658px;top:783px;width:85px;padding-right:10px">3,043</div>
<div class="c e l" style="left:743px;top:783px;width:96px;letter-spacing:-1.1px">RMT</div>
<div class="c e l" style="left:839px;top:783px;width:39px;letter-spacing:0.0px">INR</div>
<div class="c e r" style="left:878px;top:783px;width:99px;padding-right:10px">1,535.20</div>
<div class="c e r" style="left:977px;top:783px;width:132px;padding-right:10px">4,671,613.60</div>
<div class="c e r" style="left:1109px;top:783px;width:72px;padding-right:10px">0.00</div>
<div class="c e r" style="left:1181px;top:783px;width:81px;padding-right:10px">0.00</div>
<div class="c g r" style="left:1262px;top:783px;width:86px;padding-right:10px">0</div>
<div class="c g r" style="left:1348px;top:783px;width:98px;padding-right:10px">0.00</div>
<div class="c g r" style="left:1446px;top:783px;width:84px;padding-right:10px">0</div>
<div class="c g r" style="left:1530px;top:783px;width:122px;padding-right:10px">0.00</div>
<div class="c fq r" style="left:1652px;top:783px;width:104px;padding-right:10px">0</div>
<div class="c g r" style="left:1756px;top:783px;width:120px;padding-right:9.500px;border-right:none">0.00</div>
<div class="sel" style="top:809px"></div>
<div class="c k l" style="left:74px;top:810px;width:122px;letter-spacing:-0.47px">02.04.2024</div>
<div class="c k l" style="left:196px;top:810px;width:237px;letter-spacing:-0.28px">E-058-WS-11-01-03-003</div>
<div class="c o l" style="left:433px;top:810px;width:191px;letter-spacing:-0.27px">Pipe Supply DI K9 2...</div>
<div class="c o l" style="left:624px;top:810px;width:34px"><svg width="24" height="20.500" viewBox="0 0 24 20.500" style="position:absolute;left:7px;top:2px"><defs><clipPath id="fp8"><path d="M5 .3h13.500l3.500 2 2 3.200v9l-2 3.200-3.500 2.300H5L1.800 17.500.3 14.500v-9L1.800 2.500z"/></clipPath></defs><path d="M5 .6h13.500l3.300 2 1.900 3v8.800l-1.900 3-3.300 2.100H5l-3-2.300-1.400-2.800v-8.800L2 2.800z" fill="#f1f1f1" stroke="#7b7b7b" stroke-width="1.200"/><g clip-path="url(#fp8)"><path d="M16 0h9v21H9.200v-5.800H16zM9.200 6.300H16v2.900H9.200z" fill="#fdc114"/><path d="M18 2h3.500v15H18z" fill="#fece3c"/><rect x="22.300" y="2" width="2" height="16" fill="#f78d05"/><rect x="9.200" y="18.300" width="13" height="2" fill="#f78d05"/><rect x="16" y="0" width="6" height="1.100" fill="#f9a010"/><path d="M7.200 5.300H15V0h1.200v6.300H9.200v2.900h7v5.900H9.200V21H7.200v-6.800H15V11.100H7.200z" fill="#d40a0a"/></g></svg></div>
<div class="c o r" style="left:658px;top:810px;width:85px;padding-right:10px">556</div>
<div class="c o l" style="left:743px;top:810px;width:96px;letter-spacing:-1.1px">RMT</div>
<div class="c o l" style="left:839px;top:810px;width:39px;letter-spacing:0.0px">INR</div>
<div class="c o r" style="left:878px;top:810px;width:99px;padding-right:10px">2,949.24</div>
<div class="c o r" style="left:977px;top:810px;width:132px;padding-right:10px">1,639,777.44</div>
<div class="c o r" style="left:1109px;top:810px;width:72px;padding-right:10px">0.00</div>
<div class="c o r" style="left:1181px;top:810px;width:81px;padding-right:10px">0.00</div>
<div class="c g r" style="left:1262px;top:810px;width:86px;padding-right:10px">0</div>
<div class="c g r" style="left:1348px;top:810px;width:98px;padding-right:10px">0.00</div>
<div class="c g r" style="left:1446px;top:810px;width:84px;padding-right:10px">556</div>
<div class="c g r" style="left:1530px;top:810px;width:122px;padding-right:10px">1,639,777.44</div>
<div class="c fq r" style="left:1652px;top:810px;width:104px;padding-right:10px">556</div>
<div class="c g r" style="left:1756px;top:810px;width:120px;padding-right:9.500px;border-right:none">1,639,777.44</div>
<div class="sel" style="top:836px"></div>
<div class="c k l" style="left:74px;top:837px;width:122px;letter-spacing:-0.47px">02.04.2024</div>
<div class="c k l" style="left:196px;top:837px;width:237px;letter-spacing:-0.36px">E-058-WS-14-01-03-001</div>
<div class="c e l" style="left:433px;top:837px;width:191px;letter-spacing:-0.54px">Pipe Supply HDPE 1...</div>
<div class="c e l" style="left:624px;top:837px;width:34px"><svg width="24" height="20.500" viewBox="0 0 24 20.500" style="position:absolute;left:7px;top:2px"><defs><clipPath id="fp9"><path d="M5 .3h13.500l3.500 2 2 3.200v9l-2 3.200-3.500 2.300H5L1.800 17.500.3 14.500v-9L1.800 2.500z"/></clipPath></defs><path d="M5 .6h13.500l3.300 2 1.900 3v8.800l-1.900 3-3.300 2.100H5l-3-2.300-1.400-2.800v-8.800L2 2.800z" fill="#f1f1f1" stroke="#7b7b7b" stroke-width="1.200"/><g clip-path="url(#fp9)"><path d="M16 0h9v21H9.200v-5.800H16zM9.200 6.300H16v2.900H9.200z" fill="#fdc114"/><path d="M18 2h3.500v15H18z" fill="#fece3c"/><rect x="22.300" y="2" width="2" height="16" fill="#f78d05"/><rect x="9.200" y="18.300" width="13" height="2" fill="#f78d05"/><rect x="16" y="0" width="6" height="1.100" fill="#f9a010"/><path d="M7.200 5.300H15V0h1.200v6.300H9.200v2.900h7v5.900H9.200V21H7.200v-6.800H15V11.100H7.200z" fill="#d40a0a"/></g></svg></div>
<div class="c e r" style="left:658px;top:837px;width:85px;padding-right:10px">56,430</div>
<div class="c e l" style="left:743px;top:837px;width:96px;letter-spacing:-1.1px">RMT</div>
<div class="c e l" style="left:839px;top:837px;width:39px;letter-spacing:0.0px">INR</div>
<div class="c e r" style="left:878px;top:837px;width:99px;padding-right:10px">297.36</div>
<div class="c e r" style="left:977px;top:837px;width:132px;padding-right:10px">16,780,024.80</div>
<div class="c e r" style="left:1109px;top:837px;width:72px;padding-right:10px">0.00</div>
<div class="c e r" style="left:1181px;top:837px;width:81px;padding-right:10px">0.00</div>
<div class="c g r" style="left:1262px;top:837px;width:86px;padding-right:10px">0</div>
<div class="c g r" style="left:1348px;top:837px;width:98px;padding-right:10px">0.00</div>
<div class="c g r" style="left:1446px;top:837px;width:84px;padding-right:10px">16,644</div>
<div class="c g r" style="left:1530px;top:837px;width:122px;padding-right:10px">4,949,259.84</div>
<div class="c fq r" style="left:1652px;top:837px;width:104px;padding-right:10px">16,644</div>
<div class="c g r" style="left:1756px;top:837px;width:120px;padding-right:9.500px;border-right:none">4,949,259.84</div>
<div class="sel" style="top:863px"></div>
<div class="c k l" style="left:74px;top:864px;width:122px;letter-spacing:-0.47px">02.04.2024</div>
<div class="c k l" style="left:196px;top:864px;width:237px;letter-spacing:-0.33px">E-058-WS-14-01-03-001-01</div>
<div class="c o l" style="left:433px;top:864px;width:191px;letter-spacing:-0.32px">110mm PN_6 Supply...</div>
<div class="c o l" style="left:624px;top:864px;width:34px"><svg width="20" height="20" viewBox="0 0 20 20" style="position:absolute;left:9px;top:1px"><path d="M6 1.300h8l4.700 4.700v8l-4.700 4.700H6L1.300 14V6z" fill="#7d7d7d" stroke="#5e5e5e" stroke-width="1.200"/><path d="M6.300 6.300l7.400 7.400M13.700 6.300l-7.400 7.400" stroke="#f4f4f4" stroke-width="1.200"/><circle cx="10" cy="10" r="1.500" fill="#fff"/><g fill="#fff"><circle cx="6.300" cy="13.700" r="1"/><circle cx="13.700" cy="13.700" r=".9"/><circle cx="12.500" cy="7.500" r=".9"/><circle cx="6.300" cy="6.300" r=".6"/></g></svg></div>
<div class="c o r" style="left:658px;top:864px;width:85px;padding-right:10px">56,430</div>
<div class="c o l" style="left:743px;top:864px;width:96px;letter-spacing:-1.1px">RMT</div>
<div class="c o l" style="left:839px;top:864px;width:39px;letter-spacing:0.0px">INR</div>
<div class="c o r" style="left:878px;top:864px;width:99px;padding-right:10px">283.20</div>
<div class="c o r" style="left:977px;top:864px;width:132px;padding-right:10px">15,980,976.00</div>
<div class="c o r" style="left:1109px;top:864px;width:72px;padding-right:10px">0.00</div>
<div class="c o r" style="left:1181px;top:864px;width:81px;padding-right:10px">0.00</div>
<div class="c g r" style="left:1262px;top:864px;width:86px;padding-right:10px">0</div>
<div class="c g r" style="left:1348px;top:864px;width:98px;padding-right:10px">0.00</div>
<div class="c g r" style="left:1446px;top:864px;width:84px;padding-right:10px">0</div>
<div class="c g r" style="left:1530px;top:864px;width:122px;padding-right:10px">0.00</div>
<div class="c fq r" style="left:1652px;top:864px;width:104px;padding-right:10px">0</div>
<div class="c g r" style="left:1756px;top:864px;width:120px;padding-right:9.500px;border-right:none">0.00</div>
<div class="a" style="left:1262px;top:620px;width:86px;height:28px;background:#fdeb99;border:2px solid #c4cbda;border-left-width:1.5px;text-align:right;padding-right:8.5px;line-height:24px">0</div>
<svg class="a" style="left:1257px;top:616px" width="96" height="37" viewBox="0 0 96 37" shape-rendering="crispEdges"><g fill="#b00c0c"><rect x="0" y="0" width="9" height="2"/><rect x="0" y="0" width="2" height="9"/><rect x="87" y="0" width="9" height="2"/><rect x="94" y="0" width="2" height="9"/><rect x="0" y="35" width="9" height="2"/><rect x="0" y="28" width="2" height="9"/><rect x="87" y="35" width="9" height="2"/><rect x="94" y="28" width="2" height="9"/></g></svg>
<style>
.tb{position:absolute;top:529px;height:29px;border:1px solid #77746a;border-radius:3.500px;background:linear-gradient(#fef5cd 0,#fdf0b9 45%,#fce9a3 55%,#fcebab 100%);box-shadow:0 1px 0 #d5dbe2,inset 0 0 0 1px rgba(255,250,220,.6);overflow:hidden}
.tbd{border-color:#c9c09a;background:linear-gradient(#fdf6da,#fbefc6 45%,#faeab8 55%,#fbf0cb)}
.tb svg{position:absolute;left:0;top:0}
.sp{position:absolute;top:534px;width:2px;height:21px;background:linear-gradient(90deg,#a9b4c1 0,#a9b4c1 50%,#fff 50%)}
.dds{position:absolute;top:1px;bottom:1px;width:1px;background:#d8c67a;box-shadow:1px 0 0 #fdf6d4}
</style>
<div class="tb" style="left:73px;width:32px"><svg width="30" height="27" viewBox="74 530 30 27"><path d="M86 531.500h14.500v19H86z" fill="#fff" stroke="#555" stroke-width="1"/>
<path d="M96 535h3.500M96 538h3.500M96 541h3.500M96 544h3.500" stroke="#6fb52c" stroke-width="1.300"/>
<path d="M81.500 549v3.500h15" fill="none" stroke="#222" stroke-width="1.600"/>
<circle cx="86.700" cy="539.500" r="7.800" fill="#eef3ea" stroke="#8a8a8a" stroke-width="1.600"/>
<rect x="83.200" y="537" width="10" height="6" fill="#7cbd2f" stroke="#4b8f1f" stroke-width=".8"/>
<path d="M92.500 546l6 6" stroke="#666" stroke-width="4.200" stroke-linecap="round"/></svg></div>
<div class="sp" style="left:110px"></div>
<div class="tb" style="left:119px;width:32px"><svg width="30" height="27" viewBox="120 530 30 27"><rect x="130.500" y="532" width="8" height="4" fill="#84c225" stroke="#4a8f1f"/>
<rect x="127.500" y="538.500" width="14.500" height="5" fill="#a9c9e8" stroke="#1d5fa8" stroke-width="1.200"/>
<rect x="124.500" y="546.500" width="20.500" height="5" fill="#84c225" stroke="#4a8f1f"/></svg></div>
<div class="tb" style="left:154px;width:32px"><svg width="30" height="27" viewBox="155 530 30 27"><rect x="159.500" y="532" width="20.500" height="5" fill="#84c225" stroke="#4a8f1f"/>
<rect x="162.500" y="539" width="14.500" height="5" fill="#a9c9e8" stroke="#1d5fa8" stroke-width="1.200"/>
<rect x="165.500" y="546.500" width="8" height="5" fill="#84c225" stroke="#4a8f1f"/></svg></div>
<div class="tb" style="left:189px;width:32px"><svg width="30" height="27" viewBox="190 530 30 27"><path d="M194.5 552v-13l3-3v-4.500h4.500v4.500l1 2h3.500l1-2v-4.500h4.500v4.500l3 3v13h-7.500v-9h-5.500v9z" fill="#93badf" stroke="#1a5a9e" stroke-width="1.600" stroke-linejoin="round"/><path d="M197 540v10M212 540v10" stroke="#c3daf0" stroke-width="1.500"/></svg></div>
<div class="tb tbd" style="left:224px;width:32px"><svg width="30" height="27" viewBox="225 530 30 27"><path d="M228.5 552v-13l3-3v-4.500h4.500v4.500l1 2h3.500l1-2v-4.500h4.500v4.500l3 3v13h-7.500v-9h-5.500v9z" fill="#bdd3e6" stroke="#9fbfdc" stroke-width="1.600" stroke-linejoin="round"/><circle cx="247" cy="544.500" r="5.500" fill="#d9e6f2" stroke="#aec7e0"/><path d="M247 541v7M243.500 544.500h7" stroke="#fff" stroke-width="2.200"/></svg></div>
<div class="tb" style="left:259px;width:42px"><svg width="40" height="27" viewBox="260 530 40 27"><path d="M262.500 532h20.500v3l-7.500 7.500v9h-5.500v-9l-7.500-7.500z" fill="#8db7de" stroke="#1a5a9e" stroke-width="1.500" stroke-linejoin="round"/>
<path d="M277.500 541h3.200v5.500h-3.200" fill="#dbe8f5" stroke="#1a5a9e" stroke-width="1.200"/></svg><div class="dds" style="left:26px"></div><svg width="40" height="27" viewBox="260 530 40 27"><path d="M296 546.500v5.500h-5.500z" fill="#1a1a2e"/></svg></div>
<div class="sp" style="left:306px"></div>
<div class="tb" style="left:315px;width:42px"><svg width="40" height="27" viewBox="316 530 40 27"><path d="M318.500 532h19v5.500h-4l-.5-1.500h-7l5.500 6-5.500 6h7l.5-1.500h4v5.500h-19v-3.500l6-6.500-6-6.500z" fill="#6bb02a" stroke="#2e7d1e" stroke-width="1.400" stroke-linejoin="miter"/>
<path d="M321 534h14M321 550h14" stroke="#4b9a22" stroke-width="1"/></svg><div class="dds" style="left:26px"></div><svg width="40" height="27" viewBox="316 530 40 27"><path d="M352 546.500v5.500h-5.500z" fill="#1a1a2e"/></svg></div>
<div class="tb tbd" style="left:360px;width:42px"><svg width="40" height="27" viewBox="361 530 40 27"><path d="M362.500 552.500L386 531" stroke="#b9b9b9" stroke-width="1.200"/>
<rect x="363" y="532" width="10.500" height="10" fill="#f6cfa8" stroke="#eeb58e"/><path d="M365.500 534.500h5.500l-2.500 2.500 2.500 2.500h-5.500" fill="none" stroke="#f0a98a" stroke-width="1.300"/>
<rect x="375" y="542" width="10.500" height="10" fill="#f3b6a4" stroke="#eaa08e"/><path d="M377.500 544.500h5.500l-2.500 2.500 2.500 2.500h-5.500" fill="none" stroke="#ea9380" stroke-width="1.300"/></svg><div class="dds" style="left:26px"></div><svg width="40" height="27" viewBox="361 530 40 27"><path d="M397 546.500v5.500h-5.500z" fill="#b3b3b3"/></svg></div>
<div class="sp" style="left:407px"></div>
<div class="tb" style="left:416px;width:32px"><svg width="30" height="27" viewBox="417 530 30 27"><path d="M424.500 540v-8.500h10.500l3.500 3.500v5" fill="#fff" stroke="#444" stroke-width="1.300"/><path d="M435 531.500v3.500h3.500" fill="none" stroke="#444" stroke-width="1"/>
<rect x="420.500" y="540.500" width="23" height="8.500" rx="1" fill="#6d9fd8" stroke="#1a4f96" stroke-width="1.500"/>
<rect x="422" y="542" width="20" height="2.500" fill="#a9c8ea"/><rect x="438" y="543" width="3.500" height="3.500" fill="#fff"/>
<rect x="423" y="550.200" width="18" height="2.500" fill="#15457f"/></svg></div>
<div class="tb" style="left:451px;width:42px"><svg width="40" height="27" viewBox="452 530 40 27"><path d="M464 531.500h9l3.500 3.500v14H464z" fill="#fff" stroke="#1a5a9e" stroke-width="1.300"/><path d="M467 531.500h6l3.500 3.500v14h-3" fill="#2a6fb5" opacity=".85"/>
<path d="M470 536h4M470 539h4M470 542h4M470 545h4" stroke="#cfe2f5" stroke-width="1.400"/>
<circle cx="461" cy="544.500" r="7.600" fill="#dfe9f3" stroke="#7a7a7a" stroke-width="1.700" stroke-dasharray="4 1.200"/>
<rect x="459.500" y="537.500" width="2.600" height="14" fill="#1a5a9e"/><path d="M463.500 540.500h5v8h-5" fill="#fff" stroke="#8aa" stroke-width=".8"/><path d="M464.500 543h3M464.500 545.500h3" stroke="#5b8fc6" stroke-width="1"/></svg><svg width="40" height="27" viewBox="452 530 40 27"><path d="M488 546.500v5.500h-5.500z" fill="#1a1a2e"/></svg></div>
<div class="tb" style="left:496px;width:42px"><svg width="40" height="27" viewBox="497 530 40 27"><rect x="498.500" y="531.500" width="12.500" height="18" fill="#8db7e2" stroke="#1a5a9e" stroke-width="1.300"/><path d="M501 535h6M501 538h5M501 541h6" stroke="#e4eefa" stroke-width="1.300"/>
<path d="M508.500 535h10l3.500 3.500v14h-13.500z" fill="#fff" stroke="#555" stroke-width="1.300"/><path d="M518.500 535v3.500h3.500" fill="none" stroke="#555"/>
<path d="M504 541.500h6.500v-3.500l6.500 6-6.500 6v-3.500H504z" fill="#7cbd2f" stroke="#3d8a1f" stroke-width="1.200" stroke-linejoin="round"/></svg><svg width="40" height="27" viewBox="497 530 40 27"><path d="M533 546.500v5.500h-5.500z" fill="#1a1a2e"/></svg></div>
<div class="tb" style="left:541px;width:42px"><svg width="40" height="27" viewBox="542 530 40 27"><rect x="549" y="531.500" width="18" height="21" fill="#fff"/>
<path d="M548.500 532h19M548.500 538.500h19M548.500 545.500h19M548.500 552h19" stroke="#505050" stroke-width="1.700"/><path d="M555.500 531.500v21M562 531.500v21M549.200 531.500v21" stroke="#606060" stroke-width="1.300"/><path d="M567 531.500v21" stroke="#606060" stroke-width="1.300"/>
<rect x="552.500" y="539.500" width="6" height="5" fill="#f8dc9a"/><path d="M556 539v6.500" stroke="#b9b9b9" stroke-width="1.500"/>
<rect x="543.800" y="538.800" width="8.200" height="6.800" fill="#fdc52a" stroke="#e8601c" stroke-width="1.700"/></svg><div class="dds" style="left:26px"></div><svg width="40" height="27" viewBox="542 530 40 27"><path d="M578 546.500v5.500h-5.500z" fill="#1a1a2e"/></svg></div>
<div class="sp" style="left:589px"></div>
<div class="tb" style="left:597px;width:32px"><svg width="30" height="27" viewBox="598 530 30 27"><rect x="601.700" y="531.200" width="21" height="21" fill="#fff" stroke="#1b86d9" stroke-width="1.800"/>
<rect x="610.200" y="534" width="3.800" height="3.600" fill="#1280d0"/><path d="M608 540h6v8h2.500v2h-9v-2h2.700v-6H608z" fill="#1280d0"/></svg></div>
<div class="sp" style="left:635px"></div>
<div class="tb" style="left:643px;width:69px"><svg width="24" height="20.500" viewBox="0 0 24 20.500" style="position:absolute;left:3px;top:2px"><defs><clipPath id="fp99"><path d="M5 .3h13.500l3.500 2 2 3.200v9l-2 3.200-3.500 2.300H5L1.800 17.500.3 14.500v-9L1.800 2.500z"/></clipPath></defs><path d="M5 .6h13.500l3.300 2 1.900 3v8.800l-1.900 3-3.300 2.100H5l-3-2.300-1.400-2.800v-8.800L2 2.800z" fill="#f1f1f1" stroke="#7b7b7b" stroke-width="1.200"/><g clip-path="url(#fp99)"><path d="M16 0h9v21H9.200v-5.800H16zM9.200 6.300H16v2.900H9.200z" fill="#fdc114"/><path d="M18 2h3.500v15H18z" fill="#fece3c"/><rect x="22.300" y="2" width="2" height="16" fill="#f78d05"/><rect x="9.200" y="18.300" width="13" height="2" fill="#f78d05"/><rect x="16" y="0" width="6" height="1.100" fill="#f9a010"/><path d="M7.200 5.300H15V0h1.200v6.300H9.200v2.900h7v5.900H9.200V21H7.200v-6.800H15V11.100H7.200z" fill="#d40a0a"/></g></svg><span style="position:absolute;left:29px;top:2px;line-height:23px;letter-spacing:-0.91px">JMR</span></div>
<div class="tb" style="left:715px;width:97px"><span style="position:absolute;left:4px;top:2px;line-height:23px;white-space:nowrap;letter-spacing:-0.29px">Revised PI</span></div>
<!-- horizontal scrollbar -->
<div class="a" style="left:19px;top:942px;width:1882px;height:26px;background:#f2f6fa;border-bottom:1px solid #b9c6d6;border-left:1px solid #c5d0de"></div>
<svg class="a" style="left:26px;top:946px" width="40" height="16" viewBox="26 946 40 16"><path d="M34 947.500v13L28.300 954zM55 947.500v13l5.700-6.500z" fill="#4c5d6b"/><rect x="33.600" y="947.500" width="1.300" height="13" fill="#4c5d6b"/><rect x="54" y="947.500" width="1.300" height="13" fill="#4c5d6b"/></svg>
<div class="a" style="left:72px;top:944px;width:1347px;height:22px;border:1px solid #98a6b6;border-radius:2px;background:linear-gradient(#e9eff6,#e3eaf3 60%,#d3dde8)"></div>
<svg class="a" style="left:739px;top:951px" width="12" height="8" viewBox="0 0 12 8"><g fill="#9fb0c2"><rect x="1" y="1" width="1.500" height="1.500"/><rect x="4" y="1" width="1.500" height="1.500"/><rect x="7" y="1" width="1.500" height="1.500"/><rect x="1" y="4" width="1.500" height="1.500"/><rect x="4" y="4" width="1.500" height="1.500"/><rect x="7" y="4" width="1.500" height="1.500"/></g></svg>
<svg class="a" style="left:1828px;top:946px" width="44" height="16" viewBox="1828 946 44 16"><path d="M1841 947.500v13l-5.700-6.500zM1861.500 947.500v13l5.700-6.500z" fill="#4c5d6b"/><rect x="1840.600" y="947.500" width="1.300" height="13" fill="#4c5d6b"/><rect x="1860.500" y="947.500" width="1.300" height="13" fill="#4c5d6b"/></svg>
<div class="a" style="left:1876px;top:942px;width:25px;height:25px;background:#e9f0f7"></div>
<!-- status bar -->
<div class="a" style="left:0;top:968px;width:1920px;height:40px;background:#fff"></div>
<svg class="a" style="left:930px;top:974px" width="60" height="28" viewBox="0 0 60 28"><defs><linearGradient id="sapg" x1="0" y1="0" x2="0" y2="1"><stop offset="0" stop-color="#05b0f0"/><stop offset=".5" stop-color="#1684dd"/><stop offset="1" stop-color="#1a5cc0"/></linearGradient></defs><path d="M0 0h58L30.500 28H0z" fill="url(#sapg)"/><text x="1" y="22.300" font-family="Liberation Sans" font-weight="bold" font-size="24.500" fill="#fff" stroke="#fff" stroke-width=".6" textLength="41" lengthAdjust="spacingAndGlyphs" letter-spacing="0">SAP</text></svg>
<svg class="a" style="left:1434px;top:978px" width="14" height="22" viewBox="0 0 14 22"><path d="M3 2.500l9.500 8.500L3 19.500z" fill="#e6eaf2" stroke="#7f92b8" stroke-width="1.200"/><path d="M3 19.500L12.500 11" stroke="#9a9a9a" stroke-width="1.400"/></svg>
<div class="a" style="left:1457px;top:977px;width:1px;height:24px;background:#dfe3ea"></div>
<div class="t" style="left:1467px;top:979px;letter-spacing:-0.38px">PS4 (2) 100</div>
<svg class="a" style="left:1571px;top:983px" width="14" height="9" viewBox="0 0 14 9"><path d="M0 0h14v1.500H0zM1 2.500h12L7 8.500z" fill="#1c2b57"/></svg>
<div class="a" style="left:1595px;top:977px;width:1px;height:24px;background:#dfe3ea"></div>
<div class="t" style="left:1605px;top:979px;letter-spacing:-0.2px">vhvheps4ci</div>
<div class="a" style="left:1706px;top:977px;width:1px;height:24px;background:#dfe3ea"></div>
<div class="t" style="left:1716px;top:979px;letter-spacing:-1.1px">OVR</div>
<div class="a" style="left:1761px;top:977px;width:1px;height:24px;background:#dfe3ea"></div>
<div class="a" style="left:1799px;top:977px;width:1px;height:24px;background:#dfe3ea"></div>
<svg class="a" style="left:1812px;top:974px" width="32" height="26" viewBox="1812 974 32 26"><g stroke="#c3c3c3" stroke-width="1.700" fill="none"><path d="M1817 977.500v9.500M1839.700 985.500v10M1819 981.800h20M1818 990.300h19"/></g><path d="M1824.500 978.300l-6 3.500 6 3.500zM1831.500 986.800l6 3.500-6 3.500z" fill="#c3c3c3"/></svg>
<div class="a" style="left:1857px;top:977px;width:1px;height:24px;background:#dfe3ea"></div>
<svg class="a" style="left:1864px;top:974px" width="30" height="28" viewBox="1864 974 30 28"><path d="M1878.500 987v-5.500q0-2.800 2.800-2.800h5.400q2.800 0 2.800 2.800v3.700" fill="none" stroke="#585858" stroke-width="2.600"/><rect x="1867.800" y="988.800" width="16.500" height="9.500" fill="#7aa6dc" stroke="#1d5c9e" stroke-width="1.600"/></svg>
<!-- taskbar -->
<div class="a" style="left:0;top:1008px;width:1920px;height:72px;background:linear-gradient(90deg,#ddd6e5 0,#e0d5e7 25%,#ecd7e8 37%,#f4dfe6 47%,#f6e3e2 58%,#f1dcda 75%,#ead4d1 100%);border-top:1px solid #b9b3bb"></div>
<style>.wt{position:absolute;font-size:17px;color:#1b1b1b;line-height:20px;white-space:nowrap;-webkit-text-stroke:0;letter-spacing:0}</style>
<!-- weather -->
<svg class="a" style="left:26px;top:1024px" width="44" height="40" viewBox="26 1024 44 40"><defs><linearGradient id="sung" x1="0.2" y1="0" x2="0.8" y2="1"><stop offset="0" stop-color="#fed60a"/><stop offset=".5" stop-color="#f9a012"/><stop offset="1" stop-color="#ee6a0a"/></linearGradient></defs><circle cx="46.900" cy="1043" r="15.100" fill="url(#sung)"/><g stroke-width="2.700" stroke-linecap="round" fill="none"><path d="M36.800 1033.800h4M47.200 1033.800h16.500" stroke="#f8f0d2"/><path d="M36.600 1040h27" stroke="#f2e6b8"/><path d="M30.600 1046h16M53.400 1046h4.200" stroke="#eedd9f"/><path d="M30.600 1052h27" stroke="#e9d795"/></g></svg>
<div class="wt" style="left:76px;top:1022px">84°F</div>
<div class="wt" style="left:76px;top:1046px;color:#5c5c5c">Haze</div>
<!-- start -->
<svg class="a" style="left:500px;top:1027px" width="35" height="35" viewBox="0 0 35 35"><defs><linearGradient id="wing" x1="0" y1="0" x2="1" y2="1"><stop offset="0" stop-color="#4cc2f5"/><stop offset="1" stop-color="#0a6fd6"/></linearGradient></defs><g fill="url(#wing)"><rect x="0" y="0" width="16.500" height="16.500" rx="1.200"/><rect x="18" y="0" width="16.500" height="16.500" rx="1.200"/><rect x="0" y="18" width="16.500" height="16.500" rx="1.200"/><rect x="18" y="18" width="16.500" height="16.500" rx="1.200"/></g></svg>
<!-- search -->
<div class="a" style="left:556px;top:1021px;width:327px;height:46px;border-radius:23px;background:linear-gradient(90deg,#f4eaf4,#fbf3f8 50%,#fdf4f4);border:1px solid #d9c9d6;box-shadow:0 1px 2px rgba(120,90,120,.25)"></div>
<svg class="a" style="left:570px;top:1030px" width="28" height="28" viewBox="0 0 28 28"><circle cx="12" cy="12" r="8.300" fill="none" stroke="#1d1d1d" stroke-width="2.400"/><path d="M18 18.500l7 7" stroke="#1d1d1d" stroke-width="2.800" stroke-linecap="round"/></svg>
<div class="a" style="left:611px;top:1031px;font-size:21px;color:#555;line-height:26px;-webkit-text-stroke:0;letter-spacing:0">Search</div>
<!-- search art -->
<svg class="a" style="left:800px;top:1022px" width="84" height="44" viewBox="800 1022 84 44"><defs><clipPath id="pillc"><path d="M556 1022H860Q882 1022 882 1044Q882 1058 868 1063.700H556z"/></clipPath><linearGradient id="rk" x1="0" y1="0" x2="1" y2="0"><stop offset="0" stop-color="#b8722e"/><stop offset=".45" stop-color="#eab46a"/><stop offset="1" stop-color="#a85f24"/></linearGradient><linearGradient id="wt" x1="0" y1="1" x2="1" y2="0"><stop offset="0" stop-color="#3f97cf"/><stop offset=".5" stop-color="#7fd0d6"/><stop offset="1" stop-color="#a6e6dc"/></linearGradient></defs><g clip-path="url(#pillc)">
<path d="M806.700 1054Q808 1049 820 1044Q817 1040 824 1039Q832 1036 842 1033.500Q850 1031.500 858 1032.500L872 1045L850 1063.500H819Q805 1060 806.700 1054z" fill="url(#wt)"/>
<path d="M858 1030Q866 1027 872 1029L882 1042V1058L860 1050Q852 1042 851 1040Q854 1033 858 1030z" fill="#d6944e"/><path d="M861 1029.500Q868 1026.500 873 1028.500L881 1037Q872 1031 861 1029.500z" fill="#5b9a2c"/>
<path d="M818 1063.500Q824 1052 836 1049.500Q846 1048.500 852 1051Q862 1054 868 1050Q873 1046 868 1041.500Q862 1038 854 1037.500" fill="none" stroke="#3b3b3b" stroke-width="7"/><path d="M838 1063.500Q840 1054 833 1051.500M852 1040Q866 1041 869 1047" fill="none" stroke="#f2c51c" stroke-width="1.100"/>
<rect x="862.500" y="1045.200" width="5" height="3.200" rx="1" fill="#e23b2e"/>
<path d="M854 1063.500Q866 1052 882 1049V1066H854z" fill="#7db82c"/>
<path d="M829.2 1032.9Q831.7 1040.6 833.3 1048.3H824.2Q826.2 1040.6 829.2 1032.9z" fill="url(#rk)"/><path d="M849.6 1029.2Q851.3 1031.9 852.5 1034.6H847.1Q848.1 1031.9 849.6 1029.2z" fill="url(#rk)"/><path d="M839.2 1038.8Q841.4 1041.5 842.9 1044.2H837.1Q837.9 1041.5 839.2 1038.8z" fill="url(#rk)"/><path d="M814.2 1046.2Q816.2 1049.8 817.5 1053.3H811.7Q812.7 1049.8 814.2 1046.2z" fill="url(#rk)"/><path d="M845.0 1045.0Q847.5 1052.1 849.2 1059.2H839.2Q841.5 1052.1 845.0 1045.0z" fill="url(#rk)"/><path d="M853.3 1045.4Q856.3 1054.4 858.3 1063.3H849.2Q850.8 1054.4 853.3 1045.4z" fill="url(#rk)"/>
<path d="M818 1063.500Q820 1056 828 1053L829 1063.500z" fill="#c07a34"/></g></svg>
<!-- task view -->
<svg class="a" style="left:902px;top:1026px" width="38" height="36" viewBox="902 1026 38 36"><defs><linearGradient id="tvg" x1="0" y1="0" x2="1" y2="1"><stop offset="0" stop-color="#dadada"/><stop offset="1" stop-color="#9d9d9d"/></linearGradient><linearGradient id="tvw" x1="0" y1="0" x2="1" y2="1"><stop offset="0" stop-color="#ffffff"/><stop offset="1" stop-color="#e6e6e8"/></linearGradient></defs><rect x="903.200" y="1036.500" width="26.600" height="24.200" rx="2.200" fill="#262626"/><rect x="912" y="1027.500" width="26.500" height="23.300" rx="1.800" fill="url(#tvw)" stroke="#dcdcde" stroke-width=".6"/><rect x="912" y="1036.500" width="17.800" height="14.300" rx="1" fill="url(#tvg)"/></svg>
<!-- copilot -->
<svg class="a" style="left:968px;top:1026px" width="38" height="35" viewBox="0 0 38 35"><defs><linearGradient id="cp1" x1="0" y1="0" x2="0" y2="1"><stop offset="0" stop-color="#1a86ea"/><stop offset=".45" stop-color="#2fb08a"/><stop offset=".75" stop-color="#9cc83a"/><stop offset="1" stop-color="#fbd50f"/></linearGradient><linearGradient id="cp2" x1="0" y1="0" x2="0" y2="1"><stop offset="0" stop-color="#a45cf2"/><stop offset=".45" stop-color="#ea549c"/><stop offset="1" stop-color="#fba43a"/></linearGradient></defs>
<path d="M21 1.500h4.500q2.500 0 3.300 2.500l2.200 7h-6z" fill="#1f4fd6"/><path d="M11 24.500h7l-2.200 7q-.8 2.500-3.300 0z" fill="#ee4f2c"/>
<path d="M9.500 1h15q3 0 2 3L21 21.500q-1 3-4 3H4.500q-4.500 0-3-4.500L5.500 4.500Q6.500 1 9.500 1z" fill="url(#cp1)"/>
<path d="M22.500 10.500H33q4.500 0 3.500 4.500L32 30q-1 3.500-5 3.500H14q-3 0-2-3L18 13.500q1-3 4.500-3z" fill="url(#cp2)"/>
<path d="M18.800 10.800h5.200l-4.300 13.500h-5.200z" fill="#f6eaee"/></svg>
<!-- folder -->
<svg class="a" style="left:1035px;top:1027px" width="37" height="34" viewBox="0 0 37 34"><path d="M0 3q0-2 2-2h10l4 4h19q2 0 2 2v5H0z" fill="#e6a817"/><rect x="0" y="6" width="37" height="27" rx="2" fill="#fcca3f"/><path d="M0 20h37v11q0 2-2 2H2q-2 0-2-2z" fill="#f9bd2a"/><path d="M7 33v-6q0-4 4-4h15q4 0 4 4v6z" fill="#1478d4"/><rect x="12" y="27" width="13" height="2.200" rx="1" fill="#0d5cab"/></svg>
<div class="a" style="left:1049px;top:1068px;width:9px;height:4px;border-radius:2px;background:#8d8589"></div>
<!-- edge -->
<svg class="a" style="left:1100px;top:1025px" width="38" height="38" viewBox="0 0 38 38"><defs><linearGradient id="ed1" x1="0" y1="0.2" x2="1" y2=".5"><stop offset="0" stop-color="#2aa6ee"/><stop offset=".5" stop-color="#2cc4c4"/><stop offset="1" stop-color="#76e344"/></linearGradient><linearGradient id="ed2" x1="0" y1="0" x2="0" y2="1"><stop offset="0" stop-color="#2b9ce8"/><stop offset="1" stop-color="#0c64c4"/></linearGradient><clipPath id="edc"><circle cx="19" cy="19" r="18.200"/></clipPath></defs>
<g clip-path="url(#edc)"><rect width="38" height="38" fill="url(#ed2)"/>
<path d="M0 17C2 7 10 0 19 0C30 0 38 9 38 18.500C38 23 34 25.500 29.500 25.500C26 25.500 23 24.500 22.500 22.500C24 21 25 19 24.500 17C23.500 13 19 11 14.500 12.300C9 13.500 5 17 3 22C1 21 0 19 0 17Z" fill="url(#ed1)"/>
<path d="M11.500 20C11 27 17 33.500 25 33C29 32.700 32.500 30.500 35 27C34 34 26 38 19 38C11 38 6 32 6.500 25C7 19 10 14.500 15 12.500C12.500 14.500 11.500 17 11.500 20Z" fill="#12509f"/>
<path d="M15.200 19.700C15.200 16.800 17.200 15.200 19.600 15.200C22.500 15.200 24.500 17 24.500 19.500C24.500 21 23.500 22.300 22.500 22.800C23 24.500 26 25.600 29.500 25.500C32 25.400 34 24.500 35.800 23C35.800 25 35.300 26.500 34.500 27.800C31 30.300 27 30.800 23 29.700C18.500 28.300 15.200 24.500 15.200 19.700Z" fill="#f1dcdf"/>
</g></svg>
<div class="a" style="left:1115px;top:1068px;width:9px;height:4px;border-radius:2px;background:#8d8589"></div>
<!-- excel -->
<svg class="a" style="left:1168px;top:1027px" width="34" height="34" viewBox="0 0 34 34"><rect x="14" y="4" width="19" height="25" rx="1.500" fill="#fff" stroke="#1e7145" stroke-width="1.600"/><g stroke="#1e7145" stroke-width="1.400"><path d="M22 7h8M22 11h8M22 15h8M22 19h8M22 23h8M26 5v22"/></g><path d="M0 4l20-4v34L0 30z" fill="#1e7145"/><path d="M5 10h3.600l2 4.500 2-4.500H16l-3.600 7 3.700 7h-3.600l-2.200-4.600L8 24H4.500l3.800-7z" fill="#fff"/></svg>
<div class="a" style="left:1181px;top:1068px;width:9px;height:4px;border-radius:2px;background:#8d8589"></div>
<!-- sap active -->
<div class="a" style="left:1227px;top:1016px;width:52px;height:57px;border-radius:6px;background:#f6e7e8;border:1px solid #eed8da"></div>
<div class="a" style="left:1222px;top:1015px;width:52px;height:58px;border-radius:6px;background:#faeeee;border:1px solid #f1dfe0;box-shadow:0 1px 2px rgba(150,110,120,.25)"></div>
<svg class="a" style="left:1232px;top:1034px" width="37" height="20" viewBox="0 0 37 20"><path d="M1 1h35L18 19H1z" fill="#2e8fd8" stroke="#c9a23a" stroke-width="1"/><path d="M5 5h20l-6 9H5z" fill="#f2b21a"/></svg>
<div class="a" style="left:1239px;top:1068px;width:24px;height:4px;border-radius:2px;background:#1570d6"></div>
<!-- notepad -->
<svg class="a" style="left:1302px;top:1025px" width="30" height="38" viewBox="0 0 30 38"><rect x="1" y="4" width="28" height="31" rx="2" fill="#3fb4dc"/><rect x="1" y="4" width="28" height="5" fill="#5fc6e8"/><rect x="1" y="32" width="28" height="4" rx="1" fill="#b3530f"/><rect x="1" y="31" width="28" height="2" fill="#e9e9e9"/><g fill="#0d6f95"><ellipse cx="5.500" cy="3.500" rx="1.500" ry="2.500"/><ellipse cx="11.800" cy="3.500" rx="1.500" ry="2.500"/><ellipse cx="18.200" cy="3.500" rx="1.500" ry="2.500"/><ellipse cx="24.500" cy="3.500" rx="1.500" ry="2.500"/></g><g stroke="#0d6f95" stroke-width="1.800"><path d="M6 13h18M6 18h18M6 23h18"/></g></svg>
<div class="a" style="left:1313px;top:1068px;width:9px;height:4px;border-radius:2px;background:#8d8589"></div>
<!-- calculator -->
<svg class="a" style="left:1368px;top:1025px" width="30" height="38" viewBox="0 0 30 38"><rect x="0.500" y="0.500" width="29" height="37" rx="3" fill="#6f7f93"/><rect x="3.500" y="3.500" width="23" height="6.500" rx="1" fill="#4fd0f2"/><g fill="#d7dde5"><rect x="3.500" y="13" width="6" height="6" rx="1"/><rect x="12" y="13" width="6" height="6" rx="1"/><rect x="20.500" y="13" width="6" height="6" rx="1"/><rect x="3.500" y="21" width="6" height="6" rx="1"/><rect x="12" y="21" width="6" height="6" rx="1"/><rect x="3.500" y="29" width="6" height="6" rx="1"/><rect x="12" y="29" width="6" height="6" rx="1"/></g><rect x="20.500" y="21" width="6" height="14" rx="1" fill="#1c4f9c"/></svg>
<div class="a" style="left:1379px;top:1068px;width:9px;height:4px;border-radius:2px;background:#8d8589"></div>
<!-- tray -->
<svg class="a" style="left:1518px;top:1037px" width="18" height="12" viewBox="0 0 18 12"><path d="M1.500 10.500L9 2.500l7.500 8" fill="none" stroke="#1b1b1b" stroke-width="1.900"/></svg>
<svg class="a" style="left:1561px;top:1033px" width="28" height="24" viewBox="0 0 28 24"><path d="M7 20q-5 0-5-4.500q0-4 4.500-4.500q1-5 6.500-5q4.500 0 6 4q6 0 6 5t-5 5z" fill="#c9c2c6" stroke="#1b1b1b" stroke-width="1.800"/><path d="M7 20q-5 0-5-4.500q0-3 3-4l14 8.500z" fill="#8f8a8d"/><path d="M5 3l18 19" stroke="#1b1b1b" stroke-width="1.800"/></svg>
<div class="wt" style="left:1615px;top:1023px;font-size:16.500px">ENG</div>
<div class="wt" style="left:1623px;top:1046px;font-size:16.500px">IN</div>
<svg class="a" style="left:1675px;top:1031px" width="28" height="27" viewBox="0 0 28 27"><g fill="none" stroke="#1b1b1b" stroke-width="1.700"><path d="M17 2.500H4q-2 0-2 2v12q0 2 2 2h14"/><path d="M8 24.500h12M11 18.500v6M17 18.500v6"/><rect x="19.500" y="2" width="5.500" height="8" rx="1.500"/><path d="M22.200 10v14"/></g><rect x="21" y="4" width="2.500" height="2.500" fill="#1b1b1b"/></svg>
<svg class="a" style="left:1711px;top:1033px" width="27" height="22" viewBox="0 0 27 22"><path d="M2 8h4l6-5.500v17L6 14H2z" fill="none" stroke="#1b1b1b" stroke-width="1.600" stroke-linejoin="round"/><path d="M16 7l8 8M24 7l-8 8" stroke="#1b1b1b" stroke-width="1.600"/></svg>
<svg class="a" style="left:1748px;top:1036px" width="26" height="16" viewBox="0 0 26 16"><rect x="1.500" y="1.500" width="20" height="13" rx="3" fill="none" stroke="#1b1b1b" stroke-width="1.900"/><rect x="4.500" y="4.500" width="6" height="7" rx="1" fill="#1b1b1b"/><path d="M22.500 5.500q2 0 2 2.500t-2 2.500z" fill="#1b1b1b"/></svg>
<div class="wt" style="left:1791px;top:1021px;width:100.5px;text-align:right;font-size:18px;letter-spacing:-0.5px">17:20</div>
<div class="wt" style="left:1771px;top:1045px;width:120.5px;text-align:right;font-size:18px;letter-spacing:0">02-07-2025</div>
</body></html>
